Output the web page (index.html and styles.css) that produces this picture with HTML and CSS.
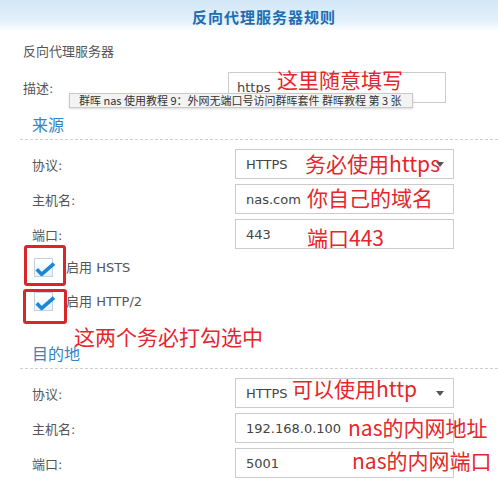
FILE: index.html
```html
<!DOCTYPE html>
<html lang="zh-CN">
<head>
<meta charset="utf-8">
<title>反向代理服务器规则</title>
<link rel="stylesheet" href="styles.css">
</head>
<body>
<div class="dialog">
  <header class="hd"><h1>反向代理服务器规则</h1></header>
  <div class="content">
    <div class="group-title">反向代理服务器</div>
    <div class="desc">
      <label>描述:</label>
      <div class="field"><span class="val">https</span><span class="note n-desc">这里随意填写</span></div>
      <div class="tip">群晖 nas 使用教程 9：外网无端口号访问群晖套件 群晖教程 第 3 张</div>
    </div>

    <h2 class="sec">来源</h2>
    <div class="rows">
      <div class="row"><label>协议:</label><div class="field"><span class="val">HTTPS</span><i class="caret"></i><span class="note n1">务必使用https</span></div></div>
      <div class="row"><label>主机名:</label><div class="field"><span class="val">nas.com</span><span class="note n2">你自己的域名</span></div></div>
      <div class="row"><label>端口:</label><div class="field"><span class="val">443</span><span class="note n3">端口443</span></div></div>
    </div>

    <div class="checks">
      <div class="check">
        <span class="hl hl1"></span>
        <span class="cb"><svg viewBox="0 0 22 20" width="22" height="20"><path d="M2.8 11.2 L7.6 16.4 L20 5.6" fill="none" stroke="#1a87d6" stroke-width="3.6" stroke-linejoin="round"/></svg></span>
        <span class="ctext">启用 HSTS</span>
      </div>
      <div class="check">
        <span class="hl hl2"></span>
        <span class="cb"><svg viewBox="0 0 22 20" width="22" height="20"><path d="M2.8 11.2 L7.6 16.4 L20 5.6" fill="none" stroke="#1a87d6" stroke-width="3.6" stroke-linejoin="round"/></svg></span>
        <span class="ctext">启用 HTTP/2</span>
      </div>
      <div class="note big">这两个务必打勾选中</div>
    </div>

    <h2 class="sec sec2">目的地</h2>
    <div class="rows">
      <div class="row"><label>协议:</label><div class="field"><span class="val">HTTPS</span><i class="caret"></i><span class="note n4">可以使用http</span></div></div>
      <div class="row"><label>主机名:</label><div class="field"><span class="val">192.168.0.100</span><span class="note n5">nas的内网地址</span></div></div>
      <div class="row"><label>端口:</label><div class="field"><span class="val">5001</span><span class="note n6">nas的内网端口</span></div></div>
    </div>
  </div>
</div>
</body>
</html>
```
FILE: styles.css
```css
* { box-sizing: border-box; }
html, body { margin: 0; padding: 0; background: #fff; }
body {
  width: 498px;
  height: 494px;
  overflow: hidden;
  font-family: "DejaVu Sans", "Noto Sans CJK SC", sans-serif;
  font-size: 13px;
  color: #555;
}

.hd {
  height: 30px;
  background: linear-gradient(#d2e7f6, #e4f1fa 70%, #fbfdff);
  display: flex;
  align-items: center;
  justify-content: center;
  padding: 2px 0 0 30px;
}
.hd h1 {
  margin: 0;
  font-family: "Noto Sans CJK SC", sans-serif;
  font-size: 15px;
  font-weight: 700;
  letter-spacing: 1px;
  line-height: 1;
  color: #1c6db4;
}

.content { padding-left: 20px; }

.group-title {
  margin-top: 13px;
  padding-left: 3px;
  line-height: 18px;
}

.desc {
  position: relative;
  margin-top: 11px;
  padding-left: 3px;
  height: 31px;
  display: flex;
  align-items: center;
}
.desc label { width: 205px; }
.desc .field { width: 218px; height: 31px; padding-left: 8px; }

.field {
  position: relative;
  display: flex;
  align-items: center;
  border: 1px solid #cbcbcb;
  background: #fff;
  color: #444;
}

.tip {
  position: absolute;
  left: 49px;
  top: 21px;
  width: 344px;
  height: 15px;
  padding-left: 9px;
  background: #f3f3f3;
  border: 1px solid #c9c9c9;
  box-shadow: 0 1px 2px rgba(0, 0, 0, 0.15);
  font-family: "Noto Sans CJK SC", sans-serif;
  font-size: 11px;
  line-height: 13px;
  color: #333;
  white-space: nowrap;
}

.sec {
  margin: 11px 0 0;
  padding: 0 0 5px 12px;
  font-family: "Noto Sans CJK SC", sans-serif;
  font-weight: 400;
  font-size: 16px;
  line-height: 20px;
  color: #2f87c9;
  border-bottom: 1px dashed #cfcfcf;
}
.sec2 { margin-top: 32px; }

.rows {
  margin-top: 9px;
  padding-left: 12px;
  display: flex;
  flex-direction: column;
  gap: 5px;
}
.row { display: flex; align-items: center; height: 30px; }
.row label { width: 203px; }
.rows .field { width: 219px; height: 30px; padding-left: 10px; }

.caret {
  position: absolute;
  right: 9px;
  top: 50%;
  margin-top: -2px;
  border-left: 4.5px solid transparent;
  border-right: 4.5px solid transparent;
  border-top: 5px solid #555;
}

.note {
  position: absolute;
  top: 50%;
  font-family: "Noto Sans CJK SC", sans-serif;
  font-size: 21px;
  line-height: 1;
  color: #e5262b;
  white-space: nowrap;
}
.n-desc { left: 48px; margin-top: -19px; }
.n1 { left: 69px; margin-top: -11px; }
.n2 { left: 71px; margin-top: -12px; }
.n3 { left: 71px; margin-top: -7px; }
.n4 { left: 56px; margin-top: -15px; }
.n5 { left: 112px; margin-top: -11px; }
.n6 { left: 116px; margin-top: -13px; }

.checks {
  position: relative;
  margin-top: 9px;
  padding-left: 14px;
  display: flex;
  flex-direction: column;
  gap: 15px;
}
.check {
  position: relative;
  display: flex;
  align-items: center;
  gap: 13px;
  height: 19px;
}
.cb {
  position: relative;
  width: 19px;
  height: 19px;
  border: 1px solid #c3d2de;
  background: linear-gradient(#ffffff, #eaf1f6);
}
.cb svg {
  position: absolute;
  left: -1px;
  top: -1px;
  overflow: visible;
}
.ctext { line-height: 19px; }

.hl {
  position: absolute;
  border: 3px solid #d8262c;
  border-radius: 3px;
}
.hl1 { left: -10px; top: -13px; width: 42px; height: 41px; }
.hl2 { left: -11px; top: -3px; width: 44px; height: 35px; }

.note.big {
  left: 54px;
  top: 68px;
}
```
